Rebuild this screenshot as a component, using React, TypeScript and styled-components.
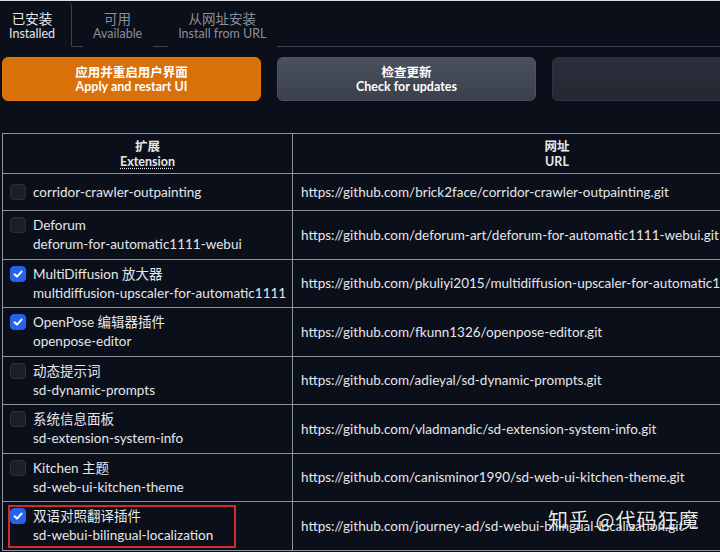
import React from "react";
import styled, { createGlobalStyle } from "styled-components";

const GlobalStyle = createGlobalStyle`
  html, body {
    margin: 0;
    padding: 0;
    background: #0b0f19;
    overflow: hidden;
  }
  body {
    font-family: "Lato", "Noto Sans CJK SC", sans-serif;
    color: #e5e7eb;
  }
`;

const Page = styled.div`
  position: relative;
  width: 720px;
  height: 552px;
  overflow: hidden;
  border-top: 1px solid #d9dce1;
  box-sizing: border-box;
`;

const TabBar = styled.div`
  display: flex;
  height: 45px;
  border-bottom: 1px solid #3b4250;
`;

const Tab = styled.div<{ $active?: boolean }>`
  display: flex;
  flex-direction: column;
  align-items: center;
  justify-content: center;
  padding: ${({ $active }) => ($active ? "6px 16px 0 9px" : "6px 10px 0")};
  margin-bottom: -1px;
  color: ${({ $active }) => ($active ? "#e5e7eb" : "#8a909b")};
  background: #0b0f19;
  border-right: 1px solid ${({ $active }) => ($active ? "#3b4250" : "transparent")};
  border-bottom: 1px solid ${({ $active }) => ($active ? "#0b0f19" : "transparent")};
  margin-right: ${({ $active }) => ($active ? "11px" : "15px")};
  border-top-right-radius: 6px;
`;

const TabZh = styled.span`
  font-size: 13.5px;
  line-height: 15px;
`;

const TabEn = styled.span`
  font-size: 12.5px;
  line-height: 14px;
`;

const Actions = styled.div`
  display: flex;
  gap: 16px;
  padding: 10px 0 0 2px;
`;

const ActionButton = styled.button<{ $variant: "primary" | "secondary" | "plain" }>`
  flex: 0 0 259px;
  height: 44px;
  border-radius: 6px;
  border: 1px solid
    ${({ $variant }) =>
      $variant === "primary" ? "#e07a10" : $variant === "secondary" ? "#4b5361" : "#2c3340"};
  background: ${({ $variant }) =>
    $variant === "primary"
      ? "#d9700a"
      : $variant === "secondary"
      ? "linear-gradient(180deg, #4a515e, #3a404c)"
      : "linear-gradient(180deg, #2a303b, #232833)"};
  color: #ffffff;
  font-family: "Lato", "Noto Sans CJK SC", sans-serif;
  font-weight: 700;
  display: flex;
  flex-direction: column;
  align-items: center;
  justify-content: center;
  padding: 0;
`;

const BtnZh = styled.span`
  font-size: 12.5px;
  line-height: 15px;
`;

const BtnEn = styled.span`
  font-size: 12.5px;
  line-height: 14px;
`;

const TableWrap = styled.div`
  margin: 32px 0 0 2px;
`;

const Table = styled.table`
  border-collapse: collapse;
  width: 820px;
  table-layout: fixed;
  font-size: 13.5px;
`;

const HeadCell = styled.th`
  border: 1px solid #8e939c;
  padding: 5px 8px 4px;
  font-weight: 700;
  text-align: center;
  vertical-align: middle;
`;

const HeadZh = styled.div`
  font-size: 12.5px;
  line-height: 15px;
`;

const HeadEn = styled.div<{ $dotted?: boolean }>`
  font-size: 12.5px;
  line-height: 15px;
  span {
    text-decoration: ${({ $dotted }) => ($dotted ? "underline dotted" : "none")};
    text-underline-offset: 2px;
  }
`;

const Cell = styled.td<{ $single?: boolean }>`
  position: relative;
  border: 1px solid #8e939c;
  padding: ${({ $single }) => ($single ? "8px 8px 8px 7px" : "4px 8px 4px 7px")};
  vertical-align: middle;
  white-space: nowrap;
  overflow: hidden;
`;

const NameLine = styled.div`
  display: flex;
  align-items: center;
  gap: 7px;
  height: 20px;
  line-height: 20px;
`;

const SubLine = styled.div`
  padding-left: 23px;
  height: 19.5px;
  line-height: 19.5px;
`;

const Box = styled.span<{ $checked?: boolean }>`
  flex: 0 0 16px;
  width: 16px;
  height: 16px;
  box-sizing: border-box;
  border-radius: 4px;
  display: inline-flex;
  align-items: center;
  justify-content: center;
  background: ${({ $checked }) => ($checked ? "#2563eb" : "#1a1f2a")};
  border: 1px solid ${({ $checked }) => ($checked ? "#2563eb" : "#2b313d")};
`;

const UrlCell = styled(Cell)`
  padding-left: 8px;
`;

const Highlight = styled.div`
  position: absolute;
  left: 5px;
  top: 3px;
  width: 228px;
  height: 43px;
  box-sizing: border-box;
  border: 2px solid #d42a2a;
  pointer-events: none;
`;

const Watermark = styled.div`
  position: absolute;
  left: 548px;
  top: 506px;
  font-family: "Noto Sans CJK SC", sans-serif;
  font-size: 20px;
  line-height: 26px;
  letter-spacing: 1px;
  color: rgba(255, 255, 255, 0.92);
  text-shadow: 0 0 2px rgba(0, 0, 0, 0.5);
`;

type Ext = {
  title: string;
  name?: string;
  url: string;
  checked?: boolean;
  marked?: boolean;
};

const extensions: Ext[] = [
  {
    title: "corridor-crawler-outpainting",
    url: "https://github.com/brick2face/corridor-crawler-outpainting.git",
  },
  {
    title: "Deforum",
    name: "deforum-for-automatic1111-webui",
    url: "https://github.com/deforum-art/deforum-for-automatic1111-webui.git",
  },
  {
    title: "MultiDiffusion 放大器",
    name: "multidiffusion-upscaler-for-automatic1111",
    url: "https://github.com/pkuliyi2015/multidiffusion-upscaler-for-automatic1111.git",
    checked: true,
  },
  {
    title: "OpenPose 编辑器插件",
    name: "openpose-editor",
    url: "https://github.com/fkunn1326/openpose-editor.git",
    checked: true,
  },
  {
    title: "动态提示词",
    name: "sd-dynamic-prompts",
    url: "https://github.com/adieyal/sd-dynamic-prompts.git",
  },
  {
    title: "系统信息面板",
    name: "sd-extension-system-info",
    url: "https://github.com/vladmandic/sd-extension-system-info.git",
  },
  {
    title: "Kitchen 主题",
    name: "sd-web-ui-kitchen-theme",
    url: "https://github.com/canisminor1990/sd-web-ui-kitchen-theme.git",
  },
  {
    title: "双语对照翻译插件",
    name: "sd-webui-bilingual-localization",
    url: "https://github.com/journey-ad/sd-webui-bilingual-localization.git",
    checked: true,
    marked: true,
  },
];

function Check({ checked }: { checked?: boolean }) {
  return (
    <Box $checked={checked}>
      {checked && (
        <svg width="12" height="12" viewBox="0 0 12 12" fill="none">
          <path
            d="M2.5 6.3 L5 8.6 L9.6 3.6"
            stroke="#fff"
            strokeWidth="2"
            strokeLinecap="round"
            strokeLinejoin="round"
          />
        </svg>
      )}
    </Box>
  );
}

export default function App() {
  return (
    <>
      <GlobalStyle />
      <Page>
        <TabBar>
          <Tab $active>
            <TabZh>已安装</TabZh>
            <TabEn>Installed</TabEn>
          </Tab>
          <Tab>
            <TabZh>可用</TabZh>
            <TabEn>Available</TabEn>
          </Tab>
          <Tab>
            <TabZh>从网址安装</TabZh>
            <TabEn>Install from URL</TabEn>
          </Tab>
        </TabBar>

        <Actions>
          <ActionButton $variant="primary">
            <BtnZh>应用并重启用户界面</BtnZh>
            <BtnEn>Apply and restart UI</BtnEn>
          </ActionButton>
          <ActionButton $variant="secondary">
            <BtnZh>检查更新</BtnZh>
            <BtnEn>Check for updates</BtnEn>
          </ActionButton>
          <ActionButton $variant="plain" />
        </Actions>

        <TableWrap>
          <Table>
            <colgroup>
              <col style={{ width: 290 }} />
              <col />
            </colgroup>
            <thead>
              <tr>
                <HeadCell>
                  <HeadZh>扩展</HeadZh>
                  <HeadEn $dotted>
                    <span>Extension</span>
                  </HeadEn>
                </HeadCell>
                <HeadCell>
                  <HeadZh>网址</HeadZh>
                  <HeadEn>
                    <span>URL</span>
                  </HeadEn>
                </HeadCell>
              </tr>
            </thead>
            <tbody>
              {extensions.map((ext) => (
                <tr key={ext.url}>
                  <Cell $single={!ext.name}>
                    <NameLine>
                      <Check checked={ext.checked} />
                      <span>{ext.title}</span>
                    </NameLine>
                    {ext.name && <SubLine>{ext.name}</SubLine>}
                    {ext.marked && <Highlight />}
                  </Cell>
                  <UrlCell>{ext.url}</UrlCell>
                </tr>
              ))}
            </tbody>
          </Table>
        </TableWrap>

        <Watermark>知乎 @代码狂魔</Watermark>
      </Page>
    </>
  );
}
